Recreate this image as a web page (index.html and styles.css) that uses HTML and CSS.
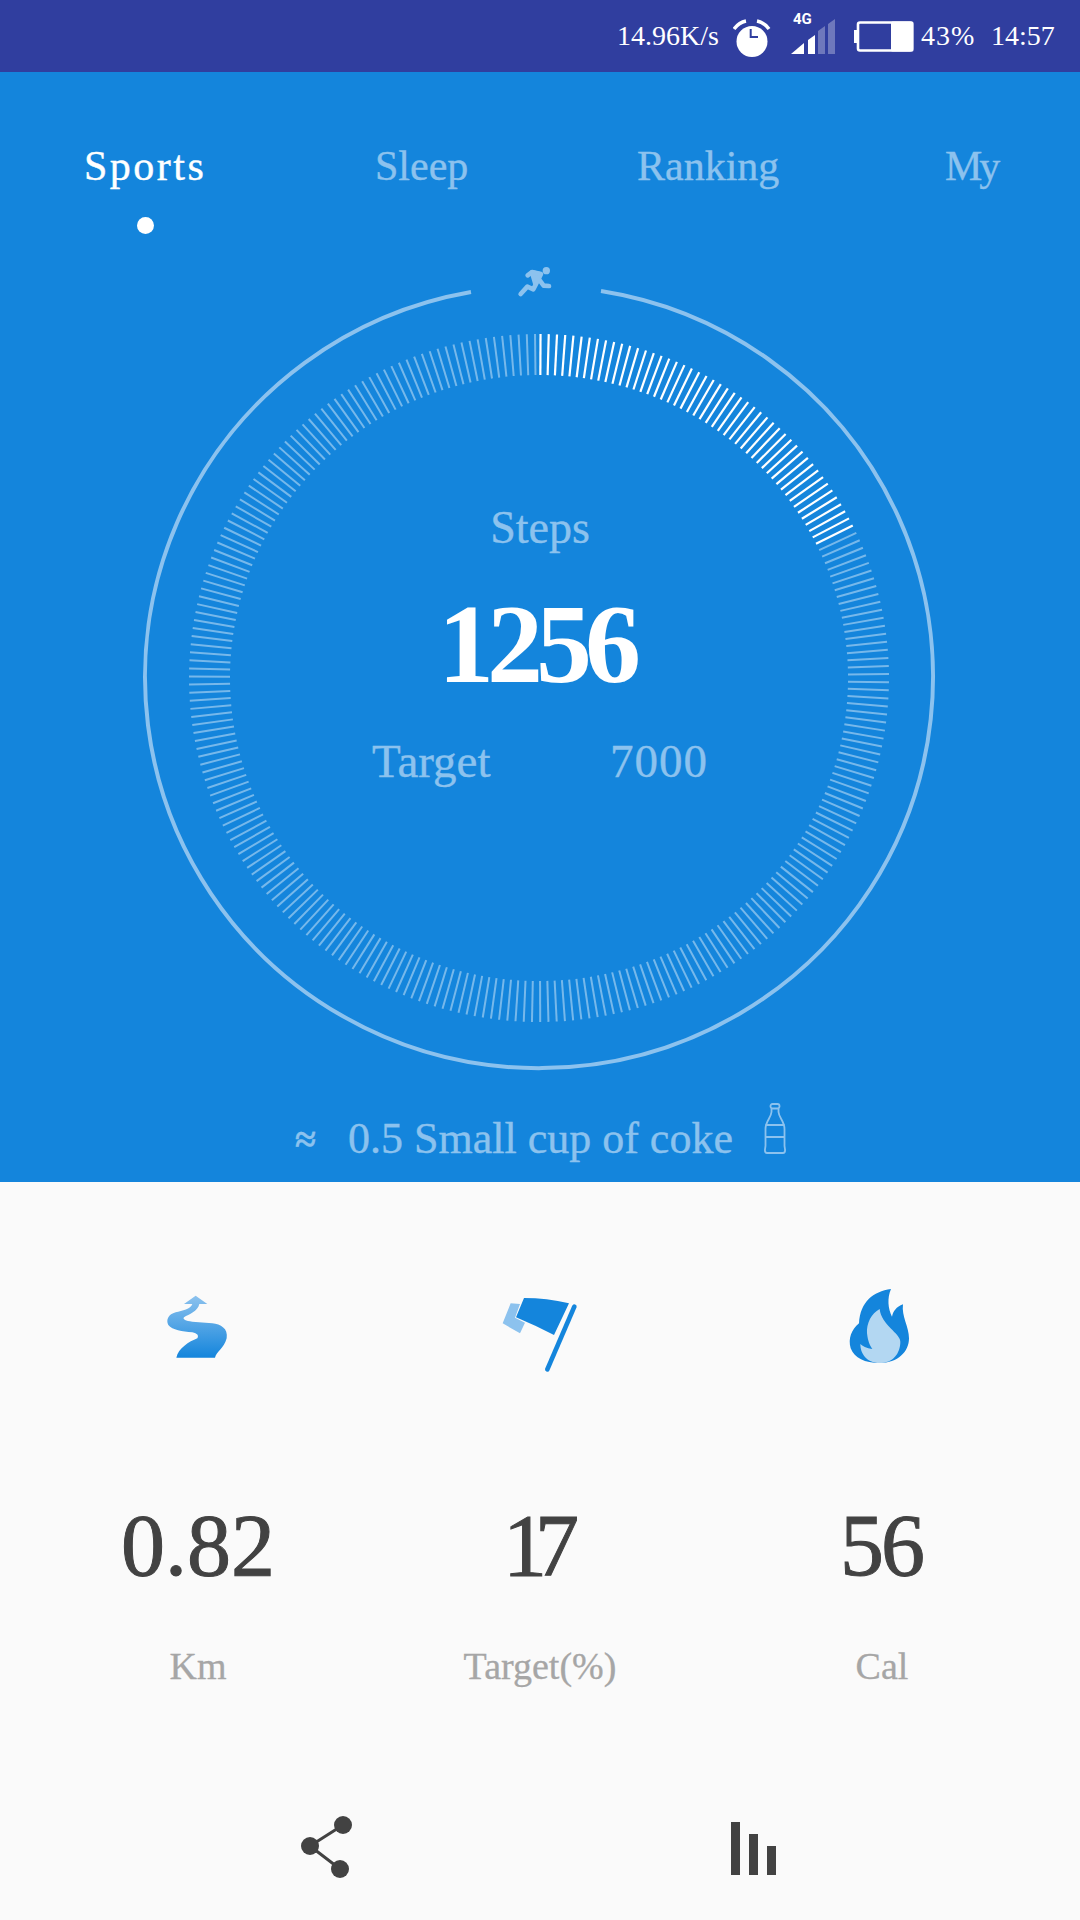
FILE: index.html
```html
<!DOCTYPE html>
<html lang="en">
<head>
<meta charset="utf-8">
<title>Sports</title>
<link rel="stylesheet" href="styles.css">
</head>
<body>
<div class="phone">
  <header class="statusbar">
    <span class="net">14.96K/s</span>
    <svg class="alarm" width="38" height="40" viewBox="0 0 38 40">
      <circle cx="19" cy="24.500" r="15.500" fill="#fff"/>
      <path d="M17.700 12V20H25" fill="none" stroke="#303e9f" stroke-width="2"/>
      <path d="M1 12C4 8 8 5 13 4M36 12C33 8 29 5 24 4" fill="none" stroke="#fff" stroke-width="3.500"/>
    </svg>
    <div class="signal">
      <span class="signal-label">4G</span>
      <svg width="44" height="36" viewBox="0 0 44 36">
        <path d="M0 35 13 24V35Z" fill="#fff"/>
        <path d="M17 21 24 16V35H17Z" fill="#fff"/>
        <path d="M27 12 34 7V35H27Z M37 5 44 0V35H37Z" fill="#fff" opacity=".3"/>
      </svg>
    </div>
    <svg class="battery" width="60" height="31" viewBox="0 0 60 31">
      <path d="M0 9H3V22H0Z" fill="#fff"/>
      <rect x="4" y="1.500" width="54" height="28" rx="2" fill="none" stroke="#fff" stroke-width="2.600"/>
      <rect x="37" y="0.500" width="22.500" height="30" rx="1.500" fill="#fff"/>
    </svg>
    <span class="battery-pct">43%</span>
    <span class="clock">14:57</span>
  </header>

  <section class="hero">
    <nav class="tabs">
      <a class="tab tab-sports is-active">Sports<i class="tab-dot"></i></a>
      <a class="tab tab-sleep">Sleep</a>
      <a class="tab tab-ranking">Ranking</a>
      <a class="tab tab-my">My</a>
    </nav>

    <div class="dial">
      <svg class="dial-art" viewBox="0 242 1080 848" width="1080" height="848">
        <path class="dial-ring" d="M601 291A394 391 0 1 1 471 292"/>
        <g id="ticks"></g>
        <g transform="translate(440 240) scale(.3333)" class="runner">
          <circle cx="319" cy="92" r="11"/>
          <path d="M263 106 276 96 303 102 287 134 280 148 262 140 242 162"/>
          <path d="M297 118 311 137 327 138"/>
          <path d="M276 97 300 103 286 131Z" class="runner-fill"/>
        </g>
      </svg>
      <div class="dial-copy">
        <div class="dial-label">Steps</div>
        <div class="dial-value">1256</div>
        <div class="dial-target"><span>Target</span><span class="dial-goal">7000</span></div>
      </div>
    </div>

    <div class="coke">
      <span class="coke-approx">≈</span>
      <span class="coke-text">0.5 Small cup of coke</span>
      <svg class="bottle" width="22" height="51" viewBox="0 0 22 51" fill="none" stroke="#8cc2ee" stroke-width="1.800">
        <rect x="6.500" y="1" width="9" height="4.500" rx="2"/>
        <path d="M7.500 5.500V9C7 15 1.500 18 1.500 26V43L0.900 47C0.900 49 2 50 3 50H19C20 50 21.100 49 21.100 47L20.500 43V26C20.500 18 15 15 14.500 9V5.500"/>
        <path d="M1.500 22H20.500M1.500 34H20.500"/>
      </svg>
    </div>
  </section>

  <main class="summary">
    <div class="stats">
      <div class="stat">
        <svg class="stat-icon" width="120" height="120" viewBox="0 0 360 360">
          <defs>
            <linearGradient id="road" x1="0" y1="0" x2="0" y2="1">
              <stop offset="0" stop-color="#8cc2ee"/>
              <stop offset="1" stop-color="#1485dc"/>
            </linearGradient>
          </defs>
          <path fill="url(#road)" d="M170 77 205 102H181C176 125 150 132 135 142 130 148 140 153 160 155L220 160C245 163 268 175 263 205 255 235 232 245 228 263H112C118 235 150 215 175 205 180 197 175 190 160 187 130 185 100 180 88 165 80 150 88 133 110 127 130 122 155 118 160 102H135Z"/>
        </svg>
        <div class="stat-value">0.82</div>
        <div class="stat-label">Km</div>
      </div>
      <div class="stat">
        <svg class="stat-icon stat-icon-flag" width="120" height="120" viewBox="0 0 360 360">
          <path fill="#8cc2ee" d="M92 100 120 102 105 143 135 158 120 190 68 160Z"/>
          <path fill="#1485dc" d="M132 84Q200 84 267 100L222 195Q170 168 108 142Z"/>
          <path d="M283 110 202 298" stroke="#1485dc" stroke-width="14" stroke-linecap="round"/>
        </svg>
        <div class="stat-value stat-value-tight">17</div>
        <div class="stat-label">Target(%)</div>
      </div>
      <div class="stat">
        <svg class="stat-icon" width="120" height="120" viewBox="0 0 360 360">
          <path fill="#1485dc" d="M204 57C150 65 112 95 108 160 85 180 75 205 83 235 95 265 125 279 170 279 225 279 258 245 258 205 258 170 235 140 240 103 220 110 210 125 207 140 195 115 192 85 204 57Z"/>
          <path fill="#b3d7f2" d="M170 117C145 130 130 160 132 190 135 215 140 225 148 237 130 235 118 228 112 222 112 250 130 279 170 279 210 279 232 250 232 215 232 190 175 165 170 117Z"/>
        </svg>
        <div class="stat-value stat-value-snug">56</div>
        <div class="stat-label">Cal</div>
      </div>
    </div>
    <div class="actions">
      <svg class="action-share" width="54" height="62" viewBox="0 0 54 62">
        <path d="M10 30 43 9M10 30 40 53" stroke="#424242" stroke-width="3" fill="none"/>
        <circle cx="10" cy="30" r="9" fill="#424242"/>
        <circle cx="43" cy="9" r="9" fill="#424242"/>
        <circle cx="40" cy="53" r="9" fill="#424242"/>
      </svg>
      <div class="action-bars">
        <i class="bar bar-tall"></i>
        <i class="bar bar-mid"></i>
        <i class="bar bar-low"></i>
      </div>
    </div>
  </main>
</div>
<script src="script.js"></script>
</body>
</html>
```
FILE: styles.css
```css
* { box-sizing: border-box; }
html, body { margin: 0; padding: 0; }
body {
  width: 1080px;
  height: 1920px;
  overflow: hidden;
  background: #fafafa;
  font-family: "Liberation Serif", serif;
}
.phone { width: 1080px; height: 1920px; display: flex; flex-direction: column; }

/* status bar */
.statusbar {
  height: 72px;
  flex: none;
  background: #303e9f;
  color: #fff;
  display: flex;
  align-items: center;
  padding-left: 617px;
  font-size: 28px;
  line-height: 72px;
}
.net { width: 117px; white-space: nowrap; }
.alarm { margin-left: -1px; margin-top: 2px; flex: none; }
.signal { position: relative; margin-left: 20px; width: 44px; height: 36px; margin-top: 1px; }
.signal svg { display: block; }
.signal-label {
  position: absolute;
  left: 2px;
  top: -9px;
  font: 700 15px/18px Roboto, sans-serif;
}
.battery { margin-left: 19px; flex: none; }
.battery-pct { margin-left: 7px; width: 70px; white-space: nowrap; letter-spacing: 1px; }
.clock { white-space: nowrap; }

/* hero */
.hero {
  height: 1110px;
  flex: none;
  background: #1485dc;
  display: flex;
  flex-direction: column;
}
.tabs {
  height: 170px;
  flex: none;
  position: relative;
  display: flex;
  align-items: flex-start;
  padding-top: 69px;
  font-size: 42px;
  line-height: 50px;
  color: #8cc2ee;
  -webkit-text-stroke: .4px currentColor;
}
.tab { position: relative; display: block; white-space: nowrap; }
.tab.is-active { color: #fff; letter-spacing: 2.500px; }
.tab-sports { margin-left: 84px; width: 291px; }
.tab-sleep { width: 262px; }
.tab-ranking { width: 308px; }
.tab-my { letter-spacing: -3px; }
.tab-dot {
  position: absolute;
  left: 53px;
  top: 76px;
  width: 17px;
  height: 17px;
  border-radius: 50%;
  background: #fff;
}

.dial { position: relative; height: 848px; flex: none; }
.dial-art { position: absolute; left: 0; top: 0; display: block; }
.dial-ring { fill: none; stroke: #8cc2ee; stroke-width: 4; }
.tick { stroke: rgba(255, 255, 255, .42); stroke-width: 2; }
.tick-on { stroke: #fff; stroke-width: 2.200; }
.runner path { fill: none; stroke: #8cc2ee; stroke-width: 14; stroke-linecap: round; stroke-linejoin: round; }
.runner circle { fill: #8cc2ee; }
.runner .runner-fill { fill: #8cc2ee; }

.dial-copy {
  position: relative;
  display: flex;
  flex-direction: column;
  align-items: center;
  padding-top: 261px;
}
.dial-label { font-size: 46px; line-height: 50px; color: #8cc2ee; -webkit-text-stroke: .4px currentColor; }
.dial-value {
  margin-top: 26px;
  margin-left: -8px;
  font-size: 112px;
  font-weight: 700;
  line-height: 130px;
  letter-spacing: -7px;
  color: #fff;
}
.dial-target {
  margin-top: 27px;
  width: 336px;
  display: flex;
  justify-content: space-between;
  font-size: 47px;
  line-height: 50px;
  color: #8cc2ee;
  -webkit-text-stroke: .4px currentColor;
}
.dial-goal { letter-spacing: 1px; }

.coke {
  flex: 1;
  display: flex;
  align-items: flex-start;
  color: #8cc2ee;
  font-size: 44px;
  line-height: 50px;
  padding-left: 295px;
  padding-top: 24px;
  -webkit-text-stroke: .4px currentColor;
}
.coke-approx { width: 53px; font-size: 38px; font-weight: 700; }
.coke-text { width: 416px; white-space: nowrap; }
.bottle { margin-top: -11px; flex: none; }

/* lower panel */
.summary { flex: 1; display: flex; flex-direction: column; background: #fafafa; }
.stats {
  display: grid;
  grid-template-columns: repeat(3, 342px);
  padding: 88px 0 0 28px;
}
.stat { display: flex; flex-direction: column; align-items: center; }
.stat-icon { display: block; }
.stat-icon-flag { margin-left: -3px; }
.stat-value {
  margin-top: 111px;
  height: 90px;
  margin-left: -2px;
  font-size: 88px;
  line-height: 90px;
  color: #424242;
  -webkit-text-stroke: 1px currentColor;
}
.stat-value-tight { letter-spacing: -12px; margin-left: -12px; }
.stat-value-snug { letter-spacing: -3px; margin-left: -4px; }
.stat-label {
  margin-top: 53px;
  margin-left: -2px;
  font-size: 38px;
  line-height: 44px;
  color: #a6a6a6;
  -webkit-text-stroke: .3px currentColor;
}
.actions {
  position: relative;
  display: flex;
  align-items: flex-end;
  padding-top: 128px;
  padding-left: 300px;
}
.action-share { display: block; flex: none; }
.action-bars {
  margin-left: 377px;
  margin-bottom: 3px;
  display: flex;
  align-items: flex-end;
  gap: 9px;
  height: 53px;
}
.bar { display: block; width: 9px; background: #424242; }
.bar-tall { height: 53px; }
.bar-mid { height: 41px; }
.bar-low { height: 29px; }
```
FILE: script.js
```js
var group = document.getElementById('ticks');
var NS = 'http://www.w3.org/2000/svg';
var step = 1.35;
var done = 1256 / 7000 * 360;
for (var a = 0.25; a < 359.8; a += step) {
  var rad = a * Math.PI / 180;
  var s = Math.sin(rad), c = Math.cos(rad);
  var line = document.createElementNS(NS, 'line');
  line.setAttribute('x1', 539 + 309 * s);
  line.setAttribute('y1', 678 - 303 * c);
  line.setAttribute('x2', 539 + 350 * s);
  line.setAttribute('y2', 678 - 344 * c);
  line.setAttribute('class', a <= done ? 'tick tick-on' : 'tick');
  group.appendChild(line);
}
```
